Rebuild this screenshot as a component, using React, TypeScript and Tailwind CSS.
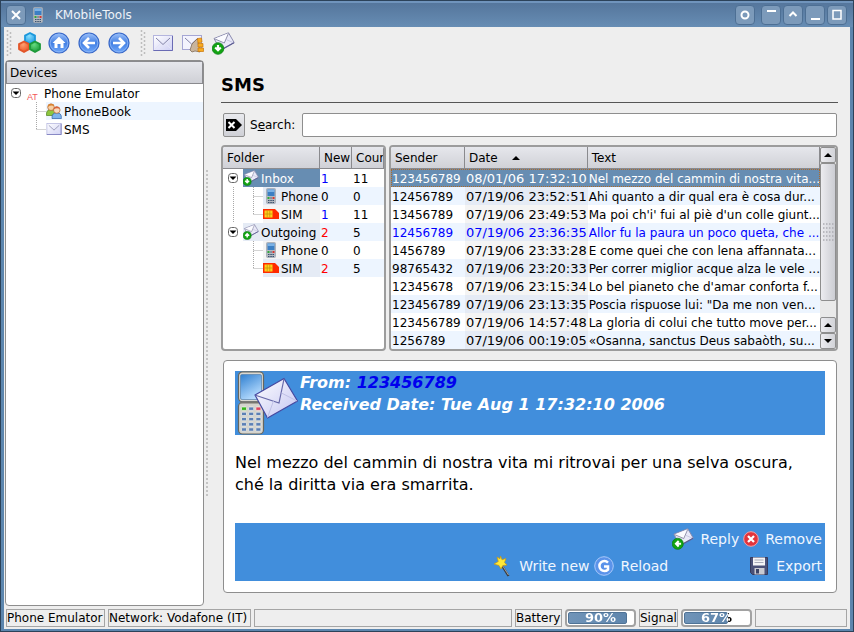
import type { ReactNode } from "react";

/* ---------- icons ---------- */

function Envelope({ className = "" }: { className?: string }) {
  return (
    <svg viewBox="0 0 20 16" className={className} aria-hidden="true">
      <defs>
        <linearGradient id="env" x1="0" y1="0" x2="1" y2="1">
          <stop offset="0" stopColor="#ffffff" />
          <stop offset="1" stopColor="#cfd0f4" />
        </linearGradient>
      </defs>
      <rect x="0.5" y="0.5" width="19" height="15" fill="url(#env)" stroke="#b4b5de" />
      <path d="M0.5 15.5h19V1" fill="none" stroke="#6a6bb4" />
      <path d="M3 3l7 6.500 7-6.500" fill="none" stroke="#8485a8" />
      <path d="M2 14l6-6M18 14l-6-6" stroke="#e4e4f6" fill="none" />
    </svg>
  );
}

function BadgeMail({ dir = "down", className = "" }: { dir?: "down" | "up" | "left"; className?: string }) {
  const arrow = {
    down: "M6 13v5M3.2 15.500l2.800 2.800 2.800-2.800",
    up: "M6 19.500v-5M3.200 17l2.800-2.800 2.800 2.800",
    left: "M9.500 16.500h-5M7 13.700l-2.800 2.800 2.800 2.800",
  }[dir];
  return (
    <svg viewBox="0 0 23 23" className={className} aria-hidden="true">
      <path d="M2 6.500L16.500 0.800l5.700 9.800L8.500 18z" fill="#e9e9f8" stroke="#8a8aae" />
      <path d="M2.500 6.800l9.800 4.200L16.500 1.300" fill="#fbfbff" stroke="#8585a0" strokeWidth="0.900" />
      <path d="M21.500 10.700l-7-3M8.500 17.500l2-7" stroke="#b9b9d8" strokeWidth="0.700" />
      <path d="M22 10.800L9 18" stroke="#5a5a92" strokeWidth="1.200" />
      <circle cx="6" cy="16.500" r="5.800" fill="#12a312" stroke="#0a7f14" strokeWidth="0.800" />
      <path d={arrow} fill="none" stroke="#fff" strokeWidth="2.200" />
    </svg>
  );
}

function Handset({ className = "" }: { className?: string }) {
  return (
    <svg viewBox="0 0 10 16" className={className} aria-hidden="true">
      <rect x="0.5" y="0.5" width="9" height="15" rx="1" fill="#b4b9c0" stroke="#a3a9b2" strokeWidth="0.800" />
      <rect x="1.500" y="1.500" width="7" height="6.500" fill="#3b7fc4" />
      <rect x="1.500" y="1.500" width="7" height="2.500" fill="#7bb2e6" />
      <rect x="1.500" y="9" width="2" height="2" fill="#2fa83a" />
      <rect x="6.500" y="9" width="2" height="2" fill="#d8362f" />
      <path d="M2 12.500h1.500M4.300 12.500h1.500M6.500 12.500H8M2 14.500h1.500M4.300 14.500h1.500M6.500 14.500H8M4.300 10h1.500" stroke="#38506e" />
    </svg>
  );
}

function SimCard() {
  return (
    <svg viewBox="0 0 16 10" className="h-2.5 w-4 shrink-0" aria-hidden="true">
      <path d="M0 0h12l4 4v6H0z" fill="#ff2a00" />
      <rect x="1.500" y="1.500" width="8" height="7" fill="#ffd21c" />
      <path d="M1.500 5h8M4.200 1.500v7M6.800 1.500v7" stroke="#c8920b" strokeWidth="0.800" />
    </svg>
  );
}

function Cubes() {
  return (
    <svg viewBox="0 0 24 24" className="size-6" aria-hidden="true">
      <defs>
        <radialGradient id="cubeBlue" cx="0.4" cy="0.25" r="0.8">
          <stop offset="0" stopColor="#8be0ff" />
          <stop offset="1" stopColor="#1a98e0" />
        </radialGradient>
        <radialGradient id="cubeRed" cx="0.4" cy="0.3" r="0.8">
          <stop offset="0" stopColor="#ffa070" />
          <stop offset="1" stopColor="#e84c1c" />
        </radialGradient>
        <radialGradient id="cubeGreen" cx="0.4" cy="0.3" r="0.8">
          <stop offset="0" stopColor="#66dc80" />
          <stop offset="1" stopColor="#159432" />
        </radialGradient>
      </defs>
      <path d="M13 2l5 2.600v5.400l-5 3-5-3V4.600z" fill="url(#cubeBlue)" stroke="#1c98dc" strokeWidth="1.800" strokeLinejoin="round" />
      <path d="M7 10.500l5 2.600v5L7 21l-5-2.900v-5z" fill="url(#cubeRed)" stroke="#e2562a" strokeWidth="1.800" strokeLinejoin="round" />
      <path d="M18 10.500l5 2.600v5L18 21l-5-2.900v-5z" fill="url(#cubeGreen)" stroke="#1d9a3a" strokeWidth="1.800" strokeLinejoin="round" />
    </svg>
  );
}

function BlueDisc({ children }: { children: ReactNode }) {
  return (
    <svg viewBox="0 0 22 22" className="size-[22px]" aria-hidden="true">
      <defs>
        <linearGradient id="disc" x1="0" y1="0" x2="0" y2="1">
          <stop offset="0" stopColor="#9cc0f8" />
          <stop offset="0.500" stopColor="#4380e4" />
          <stop offset="1" stopColor="#6fa8fa" />
        </linearGradient>
      </defs>
      <circle cx="11" cy="11" r="10" fill="url(#disc)" stroke="#3868c8" strokeWidth="1.200" />
      <circle cx="11" cy="11" r="8.800" fill="none" stroke="#8db6f6" strokeWidth="0.800" />
      {children}
    </svg>
  );
}

function MailHand() {
  return (
    <svg viewBox="0 0 22 20" className="h-5 w-[22px]" aria-hidden="true">
      <rect x="0.500" y="2.500" width="19" height="14" fill="#f3f3fd" stroke="#a5a6d4" />
      <path d="M3 5l6.500 6L16 5" fill="none" stroke="#8485a8" />
      <path d="M8 17l2-6 5-5 2 1-1 4 2 3v5l-5-1-3 1z" fill="#c9b49c" stroke="#75604a" strokeWidth="0.700" />
      <path d="M15.500 5.500l4-.5.500 4-4 1zM16 10.500h5v3.500h-5zM16 15h5.500v3.500H16z" fill="#f9ab20" stroke="#c87508" strokeWidth="0.700" />
    </svg>
  );
}

function People() {
  return (
    <svg viewBox="0 0 16 16" className="size-4 shrink-0" aria-hidden="true">
      <path d="M0.500 11q0-4.500 4.500-4.500T9.500 11v1.500h-9z" fill="#8cc63e" stroke="#4f7f1d" strokeWidth="0.700" />
      <circle cx="5" cy="4.200" r="3.300" fill="#f6cfa4" stroke="#b0622a" strokeWidth="0.700" />
      <path d="M1.800 4Q2 .8 5 .8T8 3Q4.500 1.800 1.800 4z" fill="#d9812e" />
      <path d="M6 14.500q0-4.700 4.700-4.700t4.700 4.700v1H6z" fill="#7db4ec" stroke="#2b5fa6" strokeWidth="0.700" />
      <circle cx="10.800" cy="7" r="3.300" fill="#fad9bb" stroke="#b0622a" strokeWidth="0.700" />
      <path d="M7.600 6.500Q8 3.500 10.800 3.500T14 6Q10.500 4.500 7.600 6.500z" fill="#d8603a" />
    </svg>
  );
}

function PhoneMail() {
  const keys = [0, 1, 2, 3, 4].flatMap((r) => [0, 1, 2].map((c) => ({ x: 6.500 + c * 7.200, y: 36 + r * 5.200, r, c })));
  return (
    <svg viewBox="0 0 64 64" className="size-16 shrink-0" aria-hidden="true">
      <defs>
        <linearGradient id="scr" x1="0" y1="0" x2="0.500" y2="1">
          <stop offset="0" stopColor="#2f7fd0" />
          <stop offset="1" stopColor="#b6dcff" />
        </linearGradient>
        <linearGradient id="bigenv" x1="0" y1="0" x2="1" y2="1">
          <stop offset="0" stopColor="#ffffff" />
          <stop offset="1" stopColor="#c3c4f2" />
        </linearGradient>
      </defs>
      <rect x="3.500" y="0.800" width="25" height="30" rx="4" fill="#d9d8d2" stroke="#66665f" strokeWidth="1.200" />
      <rect x="5.500" y="3.500" width="21" height="25" rx="1.500" fill="url(#scr)" stroke="#5783ad" strokeWidth="0.700" />
      <rect x="3.500" y="31.500" width="25" height="31.500" rx="4" fill="#d4d3cc" stroke="#66665f" strokeWidth="1.200" />
      <path d="M5 31.500h22" stroke="#77766e" strokeWidth="2" />
      {keys.map((k) => (
        <rect
          key={`${k.r}-${k.c}`}
          x={k.x}
          y={k.y}
          width="5"
          height="3.400"
          rx="0.600"
          fill={k.r === 0 && k.c === 0 ? "#35b51c" : k.r === 0 && k.c === 2 ? "#e0455e" : "#5b7fb5"}
          stroke="#f3f3ee"
          strokeWidth="0.700"
        />
      ))}
      <path d="M20 24L49 7.500 62.500 30 32.500 47z" fill="url(#bigenv)" stroke="#4548a0" strokeWidth="1.200" strokeLinejoin="round" />
      <path d="M20.500 24.300L44 32 49 8" fill="none" stroke="#6668a8" strokeWidth="1.200" />
      <path d="M32.500 46.500l6-16.500M62 30l-15.500-8" stroke="#bfc0e6" strokeWidth="1" />
    </svg>
  );
}

function Wand() {
  return (
    <svg viewBox="0 0 18 22" className="h-[22px] w-[18px]" aria-hidden="true">
      <path d="M8 9l7.500 12" stroke="#3c3c3c" strokeWidth="2.200" />
      <path d="M8.500 9l7 11" stroke="#b9b9b9" strokeWidth="0.800" />
      <path d="M7.500 1l1.500 3.800 4-1.300-1.500 4 2.500 2.500-4.200.5L8 14 6 10.500l-5-1.500 4.300-2.500L4 2l3 1.800z" fill="#ffe838" stroke="#c99a10" strokeWidth="0.700" />
    </svg>
  );
}

function Floppy() {
  return (
    <svg viewBox="0 0 18 18" className="size-[18px]" aria-hidden="true">
      <path d="M0.500 0.500h17v17h-15l-2-2z" fill="#4b5178" stroke="#343a5e" />
      <rect x="3" y="0.500" width="12" height="8" fill="#f4f4f6" />
      <path d="M4.500 3h9M4.500 5.500h9" stroke="#a7a9b8" />
      <rect x="4.500" y="11" width="10" height="6.500" fill="#c9cad2" />
      <rect x="6" y="12" width="3" height="4.500" fill="#3d4366" />
    </svg>
  );
}

function RemoveDot() {
  return (
    <svg viewBox="0 0 16 16" className="size-4" aria-hidden="true">
      <circle cx="8" cy="8" r="7.300" fill="#e2343c" stroke="#f4a0a4" />
      <path d="M5 5l6 6M11 5l-6 6" stroke="#fff" strokeWidth="2.300" />
    </svg>
  );
}

function ReloadDisc() {
  return (
    <svg viewBox="0 0 20 20" className="size-5" aria-hidden="true">
      <circle cx="10" cy="10" r="9.300" fill="#5b93ea" stroke="#a9c9fa" strokeWidth="1" />
      <path d="M14 6.500A5 5 0 1 0 14 13.500V10.500H10" fill="none" stroke="#fff" strokeWidth="2.500" />
    </svg>
  );
}

/* ---------- window pieces ---------- */

function TitleButton({ label, children, className = "" }: { label: string; children: ReactNode; className?: string }) {
  return (
    <button
      type="button"
      aria-label={label}
      className={`flex size-5 shrink-0 items-center justify-center rounded-sm border border-[#4d6f94] bg-[#7c9aba] ${className}`}
    >
      <svg viewBox="0 0 12 12" className="size-3" fill="none" stroke="#fff" strokeWidth="2" aria-hidden="true">
        {children}
      </svg>
    </button>
  );
}

function Grip() {
  return (
    <svg viewBox="0 0 6 26" className="h-[26px] w-1.5" aria-hidden="true">
      <path d="M1.500 0v26M4.500 2v24" stroke="#bdbdbd" strokeWidth="1.500" strokeDasharray="2 2" />
    </svg>
  );
}

function ToolButton({ label, children }: { label: string; children: ReactNode }) {
  return (
    <button type="button" aria-label={label} className="flex h-[30px] w-[30px] items-center justify-center">
      {children}
    </button>
  );
}

function Expander() {
  return (
    <button type="button" aria-label="Collapse" className="flex w-5 shrink-0 items-center justify-center">
      <svg viewBox="0 0 10 10" className="size-2.5" aria-hidden="true">
        <rect x="0.500" y="0.500" width="9" height="9" rx="3" fill="#fff" stroke="#666" />
        <path d="M1.500 3.500h7L5 7z" fill="#000" />
      </svg>
    </button>
  );
}

function Branch({ last = false }: { last?: boolean }) {
  return (
    <svg viewBox="0 0 20 18" className="h-[18px] w-5 shrink-0" aria-hidden="true">
      <path d={last ? "M10.500 0v10M10.500 9.500h9" : "M10.500 0v18M10.500 9.500h9"} stroke="#a8a8a8" strokeDasharray="1 1" fill="none" />
    </svg>
  );
}

function Trunk({ line }: { line: boolean }) {
  return (
    <svg viewBox="0 0 20 18" className="h-[18px] w-5 shrink-0" aria-hidden="true">
      {line && <path d="M10.500 0v18" stroke="#a8a8a8" strokeDasharray="1 1" />}
    </svg>
  );
}

const headBg = "bg-linear-to-b from-[#e6e7ec] to-[#cfd0d6]";
const headCell = "h-[22px] overflow-hidden border-b border-r border-[#8a8a8e] pl-1 text-left font-normal whitespace-nowrap";
const bodyCell = "overflow-hidden p-0 pt-0.5 whitespace-nowrap leading-4";

type Folder = { name: string; child: boolean; last?: boolean; trunk?: boolean; icon: ReactNode; fresh: string; count: string };

const phoneIcon = (
  <span className="flex w-4 shrink-0 justify-center">
    <Handset className="h-4 w-2.5" />
  </span>
);

const folders: Folder[] = [
  { name: "Inbox", child: false, icon: <BadgeMail className="size-4 shrink-0" />, fresh: "1", count: "11" },
  { name: "Phone", child: true, trunk: true, icon: phoneIcon, fresh: "0", count: "0" },
  { name: "SIM", child: true, trunk: true, last: true, icon: <SimCard />, fresh: "1", count: "11" },
  { name: "Outgoing", child: false, icon: <BadgeMail dir="up" className="size-4 shrink-0" />, fresh: "2", count: "5" },
  { name: "Phone", child: true, icon: phoneIcon, fresh: "0", count: "0" },
  { name: "SIM", child: true, last: true, icon: <SimCard />, fresh: "2", count: "5" },
];

function FolderTable() {
  return (
    <div className="w-[165px] shrink-0 overflow-hidden rounded-sm border-2 border-[#9c9c9c] bg-white">
      <table className="w-full table-fixed border-separate border-spacing-0">
        <thead className={headBg}>
          <tr>
            <th className={headCell}>Folder</th>
            <th className={`${headCell} w-8`}>New</th>
            <th className={`${headCell} w-8`}>Count</th>
          </tr>
        </thead>
        <tbody>
          {folders.map((f, i) => {
            const alt = i % 2 === 1;
            const tint = i === 0 ? "bg-[#678db2] text-white" : alt ? "bg-[#e5ebf5]" : "bg-[#f4f4f4]";
            const freshColor = f.fresh === "1" ? "text-[#0000ff]" : f.fresh === "2" ? "text-[#ff0000]" : "";
            return (
              <tr key={i} className="h-[18px]">
                <td className="overflow-hidden p-0">
                  <div className="flex h-[18px]">
                    {f.child ? (
                      <>
                        <Trunk line={!!f.trunk} />
                        <Branch last={f.last} />
                      </>
                    ) : (
                      <Expander />
                    )}
                    <div className={`flex flex-1 items-center ${tint}`}>
                      {f.icon}
                      <span className="pt-0.5 pl-0.5">{f.name}</span>
                    </div>
                  </div>
                </td>
                <td className={`${bodyCell} pl-px ${alt ? "bg-[#edf5ff]" : ""} ${freshColor}`}>{f.fresh}</td>
                <td className={`${bodyCell} pl-px ${alt ? "bg-[#edf5ff]" : ""}`}>{f.count}</td>
              </tr>
            );
          })}
        </tbody>
      </table>
    </div>
  );
}

const messages = [
  ["123456789", "08/01/06 17:32:10", "Nel mezzo del cammin di nostra vita..."],
  ["12456789", "07/19/06 23:52:51", "Ahi quanto a dir qual era è cosa dur..."],
  ["13456789", "07/19/06 23:49:53", "Ma poi ch'i' fui al piè d'un colle giunt..."],
  ["12456789", "07/19/06 23:36:35", "Allor fu la paura un poco queta, che ..."],
  ["1456789", "07/19/06 23:33:28", "E come quei che con lena affannata..."],
  ["98765432", "07/19/06 23:20:33", "Per correr miglior acque alza le vele ..."],
  ["12345678", "07/19/06 23:15:34", "Lo bel pianeto che d'amar conforta f..."],
  ["123456789", "07/19/06 23:13:35", "Poscia rispuose lui: \"Da me non ven..."],
  ["123456789", "07/19/06 14:57:48", "La gloria di colui che tutto move per..."],
  ["1256789", "07/19/06 00:19:05", "«Osanna, sanctus Deus sabaòth, su..."],
];

function ScrollButton({ up = false }: { up?: boolean }) {
  return (
    <button
      type="button"
      aria-label={up ? "Scroll up" : "Scroll down"}
      className="flex h-4 w-full shrink-0 items-center justify-center rounded-xs border border-[#8e8e8e] bg-linear-to-r from-[#ececf0] to-[#d2d3d8]"
    >
      <svg viewBox="0 0 8 4" className="h-1 w-2" aria-hidden="true">
        <path d={up ? "M0 4h8L4 0z" : "M0 0h8L4 4z"} fill="#000" />
      </svg>
    </button>
  );
}

function MessageTable() {
  return (
    <div className="flex min-w-0 flex-1 overflow-hidden rounded-sm border-2 border-[#9c9c9c] bg-white">
      <table className="min-w-0 flex-1 table-fixed border-separate border-spacing-0">
        <thead className={headBg}>
          <tr>
            <th className={`${headCell} w-[75px]`}>Sender</th>
            <th className={`${headCell} w-[123px]`}>
              <span className="flex items-center gap-3.5">
                Date
                <svg viewBox="0 0 8 4" className="h-1 w-2" aria-hidden="true">
                  <path d="M0 4h8L4 0z" />
                </svg>
              </span>
            </th>
            <th className={headCell}>Text</th>
          </tr>
        </thead>
        <tbody>
          {messages.map(([sender, date, text], i) => {
            const alt = i % 2 === 1;
            const row =
              i === 0
                ? "bg-[#678db2] text-white outline outline-dotted -outline-offset-1 outline-[#b06a28]"
                : alt
                  ? "bg-[#edf5ff]"
                  : "";
            const sorted = i === 0 ? "" : alt ? "bg-[#e5ebf5]" : "bg-[#f4f4f4]";
            return (
              <tr key={i} className={`h-[18px] ${row} ${i === 3 ? "text-[#0000ff]" : ""}`}>
                <td className={`${bodyCell} pl-px`}>{sender}</td>
                <td className={`${bodyCell} pl-px text-[13px] ${sorted}`}>{date}</td>
                <td className={`${bodyCell} pl-px`}>{text}</td>
              </tr>
            );
          })}
        </tbody>
      </table>
      <div className="flex w-4 shrink-0 flex-col bg-[#e9e9e9]">
        <ScrollButton up />
        <div className="flex flex-1 flex-col pb-4">
          <div className="flex flex-1 items-center justify-center rounded-xs border border-[#8e8e8e] bg-linear-to-r from-[#ececf0] to-[#cccdd3]">
            <svg viewBox="0 0 12 18" className="h-[18px] w-3" aria-hidden="true">
              <path d="M1 1h11M1 5h11M1 9h11M1 13h11M1 17h11" stroke="#acacb2" strokeWidth="1.500" strokeDasharray="1.500 1.500" />
            </svg>
          </div>
        </div>
        <ScrollButton up />
        <ScrollButton />
      </div>
    </div>
  );
}

function ActionLink({ icon, children, className = "" }: { icon: ReactNode; children: ReactNode; className?: string }) {
  return (
    <a href="#" className={`flex items-center text-[#f0f6ff] ${className}`}>
      {icon}
      {children}
    </a>
  );
}

function MessageView() {
  return (
    <article className="mt-[9px] mr-px ml-0.5 flex flex-1 flex-col rounded-sm border border-[#8e8e8e] bg-white px-[11px] pt-2.5 pb-[11px]">
      <header className="flex h-16 gap-px bg-[#418edc] text-base leading-[22px] font-bold text-white italic">
        <PhoneMail />
        <div className="pt-px">
          <p>
            From: <span className="text-[#0000ee]">123456789</span>
          </p>
          <p>Received Date: Tue Aug 1 17:32:10 2006</p>
        </div>
      </header>
      <p className="mt-[17px] flex-1 text-base leading-[22px]">
        Nel mezzo del cammin di nostra vita mi ritrovai per una selva oscura,
        <br />
        ché la diritta via era smarrita.
      </p>
      <nav className="flex h-[58px] flex-col bg-[#418edc] pr-[3px] text-sm">
        <div className="flex h-[31px] items-center justify-end gap-1">
          <ActionLink icon={<BadgeMail dir="left" className="size-[22px]" />} className="gap-1.5">
            Reply
          </ActionLink>
          <ActionLink icon={<RemoveDot />} className="gap-1.5">
            Remove
          </ActionLink>
        </div>
        <div className="flex h-6 items-center justify-end gap-1">
          <ActionLink icon={<Wand />} className="gap-2">
            Write new
          </ActionLink>
          <ActionLink icon={<ReloadDisc />} className="gap-[7px]">
            Reload
          </ActionLink>
          <ActionLink icon={<Floppy />} className="ml-[78px] gap-2">
            Export
          </ActionLink>
        </div>
      </nav>
    </article>
  );
}

const statusBox = "flex h-[18px] items-center border border-[#a5a5a5] whitespace-nowrap";

function Meter({ label, value }: { label: string; value: number }) {
  return (
    <div
      role="progressbar"
      aria-label={label}
      aria-valuenow={value}
      className="relative h-[18px] w-[71px] shrink-0 rounded-sm border-2 border-[#a2a2a2] bg-white p-px"
    >
      <div
        className="h-full rounded-xs border border-[#4f7396] bg-linear-to-r from-[#7094b8] to-[#5f86ad]"
        style={{ width: `${value}%` }}
      />
      <span
        className="absolute inset-0 bg-clip-text text-center text-[13px] leading-[14px] font-bold text-transparent"
        style={{ backgroundImage: `linear-gradient(to right, #fff ${value}%, #000 ${value}%)` }}
      >
        {value}%
      </span>
    </div>
  );
}

export default function App() {
  return (
    <div className="flex min-h-screen w-full flex-col border border-[#2c4259] bg-[#5c86ae] font-['DejaVu_Sans','Noto_Sans',sans-serif] text-xs text-black">
      <header className="flex h-[26px] items-center border-t-2 border-[#7094bc] bg-linear-to-b from-[#55769c] to-[#678db4] pt-0.5 pr-1.5 pb-0.5 pl-[5px]">
        <TitleButton label="Close">
          <path d="M2 2l8 8M10 2l-8 8" />
        </TitleButton>
        <Handset className="ml-[7px] h-4 w-2.5" />
        <h1 className="ml-3 flex-1 text-[#eef2f8]">KMobileTools</h1>
        <div className="flex items-center gap-0.5">
          <TitleButton label="On all desktops" className="mr-1">
            <circle cx="6" cy="6" r="3.500" />
          </TitleButton>
          <TitleButton label="Keep above">
            <path d="M2 2h9" />
          </TitleButton>
          <TitleButton label="Shade">
            <path d="M2.500 7L6 3.500 9.500 7" />
          </TitleButton>
          <TitleButton label="Minimize">
            <path d="M2 10h9" />
          </TitleButton>
          <TitleButton label="Maximize">
            <path d="M2 1.500h8v8.500H2z" strokeWidth="1.500" />
          </TitleButton>
        </div>
      </header>

      <div className="mx-[3px] mb-0.5 flex flex-1 flex-col bg-[#eeeeee]">
        <div role="toolbar" className="flex h-[33px] items-center pb-px pl-0.5">
          <Grip />
          <div className="ml-0.5 flex">
            <ToolButton label="Devices">
              <Cubes />
            </ToolButton>
            <ToolButton label="Home">
              <BlueDisc>
                <path d="M4.500 11L11 4.800 17.500 11H15.500v5h-3v-4h-3v4h-3v-5z" fill="#fff" />
              </BlueDisc>
            </ToolButton>
            <ToolButton label="Back">
              <BlueDisc>
                <path d="M17 11H6.500M11 6l-5 5 5 5" fill="none" stroke="#fff" strokeWidth="2.600" />
              </BlueDisc>
            </ToolButton>
            <ToolButton label="Forward">
              <BlueDisc>
                <path d="M5 11h10.500M11 6l5 5-5 5" fill="none" stroke="#fff" strokeWidth="2.600" />
              </BlueDisc>
            </ToolButton>
          </div>
          <span className="ml-1.5">
            <Grip />
          </span>
          <div className="ml-0.5 flex">
            <ToolButton label="New message">
              <Envelope className="h-4 w-5" />
            </ToolButton>
            <ToolButton label="Send stored">
              <MailHand />
            </ToolButton>
            <ToolButton label="Receive">
              <BadgeMail className="size-[23px]" />
            </ToolButton>
          </div>
        </div>

        <main className="flex flex-1 pr-3 pl-px">
          <aside className="flex w-[199px] shrink-0 flex-col rounded-sm border border-[#8e8e8e] bg-white">
            <h2 className={`h-[23px] border border-[#8a8a8e] pl-[3px] leading-[22px] ${headBg}`}>Devices</h2>
            <ul>
              <li>
                <div className="flex h-[18px] items-center">
                  <Expander />
                  <span className="mt-2 w-[18px] pl-px font-['Liberation_Sans',sans-serif] text-[9px] text-[#f25858]">
                    AT
                  </span>
                  <span className="pt-0.5">Phone Emulator</span>
                </div>
                <ul className="pl-5">
                  <li className="flex h-[18px]">
                    <Branch />
                    <span className="flex flex-1 items-center bg-[#edf5ff]">
                      <People />
                      <span className="pt-0.5 pl-0.5">PhoneBook</span>
                    </span>
                  </li>
                  <li className="flex h-[18px] items-center">
                    <Branch last />
                    <Envelope className="h-3 w-4" />
                    <span className="pt-0.5 pl-0.5">SMS</span>
                  </li>
                </ul>
              </li>
            </ul>
          </aside>

          <div className="flex w-[17px] shrink-0 items-center pl-px" aria-hidden="true">
            <div className="h-[326px] w-[3px] border-r-2 border-dotted border-[#c4c4c4]" />
          </div>

          <section className="flex min-w-0 flex-1 flex-col pb-[13px]">
            <h2 className="mt-3 h-[31px] border-b border-[#555555] text-lg leading-[26px] font-bold">SMS</h2>
            <form className="mt-2.5 flex h-6 items-center pr-px pl-0.5">
              <button
                type="button"
                aria-label="Clear search"
                className="flex h-6 w-[22px] items-center justify-center rounded-xs border border-[#8e8e8e] bg-linear-to-b from-[#e9eaee] to-[#cfd0d6]"
              >
                <svg viewBox="0 0 16 12" className="h-3 w-4" aria-hidden="true">
                  <path d="M0 0h10l6 6-6 6H0z" fill="#000" />
                  <path d="M2.500 3l6 6M8.500 3l-6 6" stroke="#fff" strokeWidth="2" />
                </svg>
              </button>
              <label htmlFor="search" className="ml-[5px] w-[52px] whitespace-nowrap">
                S<u>e</u>arch:
              </label>
              <input id="search" className="h-6 min-w-0 flex-1 rounded-xs border border-[#8e8e8e] bg-white px-1" />
            </form>
            <div className="mt-2 flex gap-[3px]">
              <FolderTable />
              <MessageTable />
            </div>
            <MessageView />
          </section>
        </main>

        <footer className="flex h-[23px] items-center gap-[3px] pr-[3px] pl-0.5">
          <span className={`${statusBox} w-[99px]`}>Phone Emulator</span>
          <span className={`${statusBox} w-[143px]`}>Network: Vodafone (IT)</span>
          <span className={`${statusBox} flex-1`} />
          <span className={`${statusBox} w-[47px]`}>Battery</span>
          <Meter label="Battery" value={90} />
          <span className={`${statusBox} w-[39px]`}>Signal</span>
          <Meter label="Signal" value={67} />
          <span className={`${statusBox} w-[92px]`} />
        </footer>
      </div>
    </div>
  );
}
